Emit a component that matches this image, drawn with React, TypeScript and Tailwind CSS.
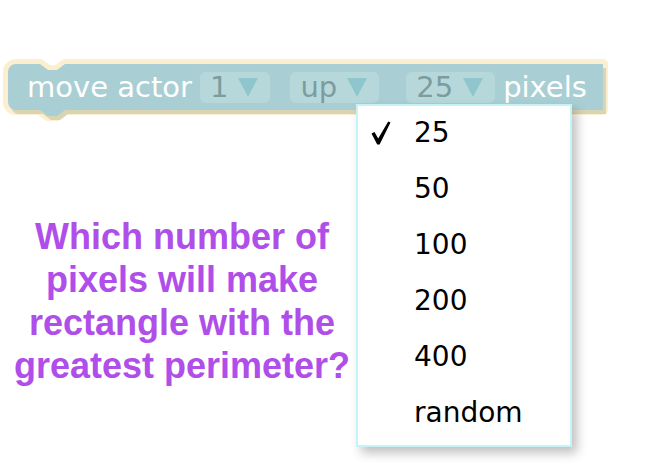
import React from 'react';

const BLOCK_PATH =
  'M 0 8 A 8 8 0 0 1 8 0 L 32 0 L 40 6 L 49 6 L 57 0 L 595 0 L 595 46 L 57 46 L 49 52 L 40 52 L 32 46 L 8 46 A 8 8 0 0 1 0 38 Z';

const OPTIONS = ['25', '50', '100', '200', '400', 'random'];

function Field({ label }: { label: string }) {
  return (
    <div className="flex h-[31px] items-center gap-[10px] rounded-[6px] bg-[#b7d8db] pl-[10px] pr-[12px] text-[#7d9c9e]">
      <span className="leading-none">{label}</span>
      <svg width="20" height="19" viewBox="0 0 20 19" className="mt-[1px]">
        <path d="M0 0 L20 0 L10 19 Z" fill="#8fc6cd" />
      </svg>
    </div>
  );
}

function Block() {
  return (
    <div className="relative ml-[8px] mt-[63px] flex h-[46px] w-[595px] items-center text-[29px] text-white">
      <svg
        className="absolute left-0 top-0 overflow-visible"
        width="595"
        height="46"
        viewBox="0 0 595 46"
      >
        <path d={BLOCK_PATH} fill="#fbefcf" stroke="#fbefcf" strokeWidth="10" strokeLinejoin="round" />
        <path d={BLOCK_PATH} fill="#d9d5b4" transform="translate(3 4)" />
        <path d={BLOCK_PATH} fill="#a9cfd4" />
      </svg>
      <div className="relative flex items-center pl-[19px]">
        <span className="mr-[8px] leading-none">move actor</span>
        <Field label="1" />
        <div className="w-[20px]" />
        <Field label="up" />
        <div className="w-[27px]" />
        <Field label="25" />
        <span className="ml-[8px] leading-none">pixels</span>
      </div>
    </div>
  );
}

function Check() {
  return (
    <svg width="20" height="24" viewBox="0 0 20 24">
      <path d="M0.5 12.5 L3.5 11 L7.2 17.5 L17.2 0.5 L19.5 1.5 L8.6 23.5 L6.2 23.5 Z" fill="#000" />
    </svg>
  );
}

function Dropdown() {
  return (
    <div className="absolute left-[356px] top-[104px] w-[216px] border-2 border-[#c6f3f7] bg-white pb-[3px] shadow-[5px_6px_10px_rgba(0,0,0,0.25)]">
      {OPTIONS.map((o, i) => (
        <div key={o} className="flex h-[56px] items-center pb-[3px] text-[28px] text-black">
          <span className="flex w-[56px] pl-[13px]">{i === 0 && <Check />}</span>
          <span className="leading-none">{o}</span>
        </div>
      ))}
    </div>
  );
}

export default function App() {
  return (
    <div
      className="relative h-[472px] w-[672px] overflow-hidden bg-white"
      style={{ fontFamily: '"DejaVu Sans", sans-serif' }}
    >
      <div className="pt-[1px]">
        <Block />
        <p
          className="mt-[105px] w-[364px] text-center text-[36px] font-bold leading-[43px] text-[#b04ee9]"
          style={{ fontFamily: '"Liberation Sans", Arial, sans-serif' }}
        >
          Which number of pixels will make rectangle with the greatest perimeter?
        </p>
      </div>
      <Dropdown />
    </div>
  );
}
